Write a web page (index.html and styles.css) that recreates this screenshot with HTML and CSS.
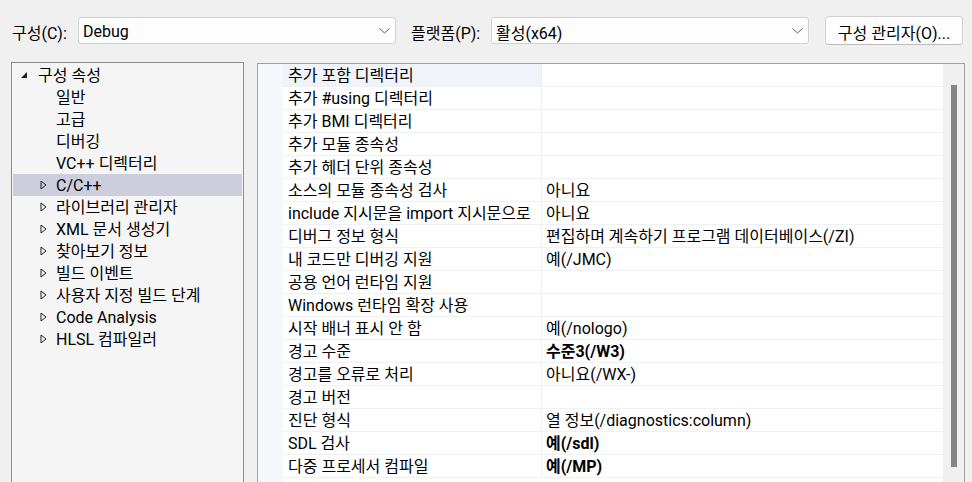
FILE: index.html
```html
<!DOCTYPE html>
<html lang="ko">
<head>
  <meta charset="UTF-8">
  <title>속성 페이지</title>
  <link rel="stylesheet" href="styles.css">
</head>
<body>

  <div class="toolbar">
    <span class="etiqueta etiqueta-config">구성(C):</span>
    <div class="combo">
      <span>Debug</span>
      <svg class="chevron" width="11" height="6" viewBox="0 0 11 6"><polyline points="0.5,0.5 5.5,5 10.5,0.5" fill="none" stroke="#606060" stroke-width="1"/></svg>
    </div>
    <span class="etiqueta etiqueta-plataforma">플랫폼(P):</span>
    <div class="combo">
      <span>활성(x64)</span>
      <svg class="chevron" width="11" height="6" viewBox="0 0 11 6"><polyline points="0.5,0.5 5.5,5 10.5,0.5" fill="none" stroke="#606060" stroke-width="1"/></svg>
    </div>
    <button class="btn">구성 관리자(O)...</button>
  </div>

  <div class="contenido">

    <div class="arbol">
      <div class="nodo raiz">
        <svg class="flecha" width="6" height="6" viewBox="0 0 6 6"><polygon points="6,0 6,6 0,6" fill="#1e1e1e"/></svg>
        <span>구성 속성</span>
      </div>
      <div class="nodo hijo"><span>일반</span></div>
      <div class="nodo hijo"><span>고급</span></div>
      <div class="nodo hijo"><span>디버깅</span></div>
      <div class="nodo hijo"><span>VC++ 디렉터리</span></div>
      <div class="nodo hijo seleccionado"><svg class="expansor" width="7" height="10" viewBox="0 0 7 10"><polygon points="1,1 6,5 1,9" fill="none" stroke="#1e1e1e"/></svg><span>C/C++</span></div>
      <div class="nodo hijo"><svg class="expansor" width="7" height="10" viewBox="0 0 7 10"><polygon points="1,1 6,5 1,9" fill="none" stroke="#1e1e1e"/></svg><span>라이브러리 관리자</span></div>
      <div class="nodo hijo"><svg class="expansor" width="7" height="10" viewBox="0 0 7 10"><polygon points="1,1 6,5 1,9" fill="none" stroke="#1e1e1e"/></svg><span>XML 문서 생성기</span></div>
      <div class="nodo hijo"><svg class="expansor" width="7" height="10" viewBox="0 0 7 10"><polygon points="1,1 6,5 1,9" fill="none" stroke="#1e1e1e"/></svg><span>찾아보기 정보</span></div>
      <div class="nodo hijo"><svg class="expansor" width="7" height="10" viewBox="0 0 7 10"><polygon points="1,1 6,5 1,9" fill="none" stroke="#1e1e1e"/></svg><span>빌드 이벤트</span></div>
      <div class="nodo hijo"><svg class="expansor" width="7" height="10" viewBox="0 0 7 10"><polygon points="1,1 6,5 1,9" fill="none" stroke="#1e1e1e"/></svg><span>사용자 지정 빌드 단계</span></div>
      <div class="nodo hijo"><svg class="expansor" width="7" height="10" viewBox="0 0 7 10"><polygon points="1,1 6,5 1,9" fill="none" stroke="#1e1e1e"/></svg><span>Code Analysis</span></div>
      <div class="nodo hijo"><svg class="expansor" width="7" height="10" viewBox="0 0 7 10"><polygon points="1,1 6,5 1,9" fill="none" stroke="#1e1e1e"/></svg><span>HLSL 컴파일러</span></div>
    </div>

    <div class="propiedades">
      <div class="margen"></div>
      <div class="tabla">
        <div class="fila activa"><div class="nombre">추가 포함 디렉터리</div><div class="valor"></div></div>
        <div class="fila"><div class="nombre">추가 #using 디렉터리</div><div class="valor"></div></div>
        <div class="fila"><div class="nombre">추가 BMI 디렉터리</div><div class="valor"></div></div>
        <div class="fila"><div class="nombre">추가 모듈 종속성</div><div class="valor"></div></div>
        <div class="fila"><div class="nombre">추가 헤더 단위 종속성</div><div class="valor"></div></div>
        <div class="fila"><div class="nombre">소스의 모듈 종속성 검사</div><div class="valor">아니요</div></div>
        <div class="fila"><div class="nombre">include 지시문을 import 지시문으로</div><div class="valor">아니요</div></div>
        <div class="fila"><div class="nombre">디버그 정보 형식</div><div class="valor">편집하며 계속하기 프로그램 데이터베이스(/ZI)</div></div>
        <div class="fila"><div class="nombre">내 코드만 디버깅 지원</div><div class="valor">예(/JMC)</div></div>
        <div class="fila"><div class="nombre">공용 언어 런타임 지원</div><div class="valor"></div></div>
        <div class="fila"><div class="nombre">Windows 런타임 확장 사용</div><div class="valor"></div></div>
        <div class="fila"><div class="nombre">시작 배너 표시 안 함</div><div class="valor">예(/nologo)</div></div>
        <div class="fila"><div class="nombre">경고 수준</div><div class="valor negrita">수준3(/W3)</div></div>
        <div class="fila"><div class="nombre">경고를 오류로 처리</div><div class="valor">아니요(/WX-)</div></div>
        <div class="fila"><div class="nombre">경고 버전</div><div class="valor"></div></div>
        <div class="fila"><div class="nombre">진단 형식</div><div class="valor">열 정보(/diagnostics:column)</div></div>
        <div class="fila"><div class="nombre">SDL 검사</div><div class="valor negrita">예(/sdl)</div></div>
        <div class="fila"><div class="nombre">다중 프로세서 컴파일</div><div class="valor negrita">예(/MP)</div></div>
      </div>
      <div class="barra">
        <div class="pulgar"></div>
      </div>
    </div>

  </div>

</body>
</html>
```

FILE: styles.css
```css
body {
  font-family: Roboto, 'Noto Sans CJK KR', sans-serif;
  font-size: 16px;
  color: #000;
  background-color: #f0f0f0;
  margin: 0;
  height: 482px;
  overflow: hidden;
}

.toolbar {
  display: flex;
  align-items: center;
  height: 61px;
  padding-left: 12px;
}

.etiqueta {
  white-space: nowrap;
  padding-top: 2px;
}

.etiqueta-config {
  width: 66px;
}

.etiqueta-plataforma {
  width: 80px;
  margin-left: 15px;
}

.combo {
  width: 318px;
  height: 27px;
  box-sizing: border-box;
  background-color: #fdfdfd;
  border: 1px solid #d0d0d0;
  border-radius: 3px;
  display: flex;
  align-items: center;
  justify-content: space-between;
  padding: 2px 5px 0 4px;
}

.chevron {
  margin-top: -2px;
}

.btn {
  width: 138px;
  height: 29px;
  margin-left: 16px;
  font-family: inherit;
  font-size: 16px;
  color: #000;
  background-color: #fdfdfd;
  border: 1px solid #d0d0d0;
  border-bottom-color: #bcbcbc;
  border-radius: 4px;
  padding: 2px 0 0;
}

.contenido {
  display: flex;
  align-items: flex-start;
  padding-left: 11px;
}

.arbol {
  width: 233px;
  height: 440px;
  box-sizing: border-box;
  background-color: #f5f5f5;
  border: 1px solid #8c8c8c;
  padding: 1px;
  margin-top: 1px;
}

.nodo {
  height: 22px;
  line-height: 22px;
  white-space: nowrap;
  display: flex;
  align-items: center;
}

.nodo span {
  position: relative;
  top: 1px;
}

.raiz {
  padding-left: 8px;
}

.raiz .flecha {
  margin-right: 11px;
}

.hijo {
  padding-left: 43px;
}

.expansor {
  margin-left: -16px;
  margin-right: 9px;
}

.seleccionado {
  background-color: #cccedb;
}

.propiedades {
  width: 708px;
  height: 430px;
  box-sizing: border-box;
  margin-left: 13px;
  margin-top: 2px;
  border: 1px solid #a0a0a0;
  border-bottom: none;
  background-color: #fff;
  display: flex;
}

.margen {
  width: 25px;
  background-color: #f5f7fa;
}

.tabla {
  width: 660px;
}

.fila {
  display: flex;
  height: 23px;
  box-sizing: border-box;
  border-bottom: 1px solid #f0f1f4;
}

.nombre {
  width: 258px;
  padding: 1px 0 0 5px;
  box-sizing: border-box;
  line-height: 21px;
  white-space: nowrap;
  overflow: hidden;
}

.valor {
  flex: 1;
  padding: 1px 0 0 4px;
  border-left: 1px solid #f0f1f4;
  line-height: 21px;
  white-space: nowrap;
}

.activa .nombre {
  background-color: #f0f4fa;
}

.negrita {
  font-weight: bold;
}

.barra {
  width: 21px;
  background-color: #f0f0f0;
  padding-top: 21px;
  padding-left: 8px;
  box-sizing: border-box;
}

.pulgar {
  width: 6px;
  height: 382px;
  background-color: #858585;
}
```
